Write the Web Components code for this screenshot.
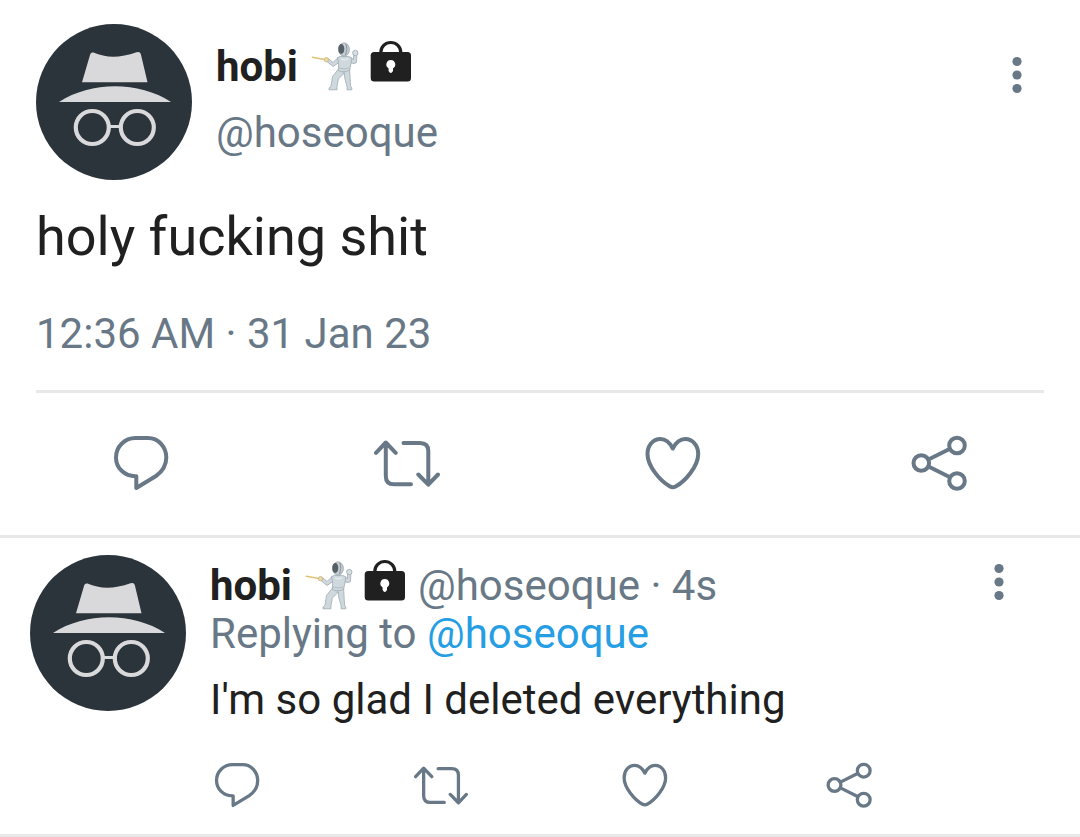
<!DOCTYPE html>
<html lang="en">
<head>
<meta charset="utf-8">
<meta name="viewport" content="width=device-width, initial-scale=1">
<title>Tweet</title>
<style>
    body {
        margin: 0;
        background: #fff;
        color: #202020;
        font-family: Roboto, "Liberation Sans", sans-serif;
        font-size: 42px;
        line-height: 48px;
        --muted: #687886;
        --link: #259ee4;
        --rule: #e8e8e8;
    }
</style>
</head>
<body>
<main>
    <main-tweet>
        <span slot="name">hobi</span>
        <a slot="handle" href="#hoseoque">@hoseoque</a>
        <span slot="text">holy fucking shit</span>
        <time slot="time" datetime="2023-01-31T00:36">12:36 AM · 31 Jan 23</time>
    </main-tweet>
    <reply-tweet>
        <span slot="name">hobi</span>
        <span slot="handle">@hoseoque · 4s</span>
        <a slot="target" href="#hoseoque">@hoseoque</a>
        <span slot="text">I'm so glad I deleted everything</span>
    </reply-tweet>
</main>

<script>
const icons = {
    reply: '<path d="M28.3 58V46.2H27.5C16.500 46.200 8 38 8 27.400S16.500 8 27.500 8H40C50.500 8 58.300 17 58.300 27.500C58.300 35 55 41 48 46Z"/>',
    retweet: '<path d="M2 22.800L11.800 12.500L21.700 22.800M11.800 13V46Q11.800 54.300 20 54.300H37M29.500 13H46Q54.300 13 54.300 21V54M44.300 44.500L54.300 54.700L64 44.500"/>',
    like: '<path d="M32.800 18.500C30 13 26 9 20.500 9C12.500 9 7.500 16 7.500 24C7.500 36 20 51 30 56.500Q32.800 58 35.600 56.500C45.600 51 58.200 36 58.200 24C58.200 16 53 9 45.200 9C39.600 9 35.600 13 32.800 18.500Z"/>',
    share: '<circle cx="15.300" cy="33" r="7.800"/><circle cx="51" cy="15.500" r="7.800"/><circle cx="51" cy="51" r="7.800"/><path d="M22.500 29.500L43.500 19M22.500 36.500L43.500 47"/>'
};

const avatarTemplate = document.createElement('template');
const badgesTemplate = document.createElement('template');
const menuTemplate = document.createElement('template');
const mainTemplate = document.createElement('template');
const replyTemplate = document.createElement('template');

avatarTemplate.innerHTML = `
<style>
    :host {
        display: block;
        flex: none;
    }

    svg {
        display: block;
        width: 156px;
        height: 156px;
    }
</style>
<svg viewBox="0 0 156 156" role="img" aria-label="Avatar">
    <circle cx="78" cy="78" r="78" fill="#2b333b"/>
    <g fill="#d9d9dc">
        <path d="M46 58.300L54.300 30Q55 28 57.500 28.600C70 34.200 84 34.200 100.500 28.300Q104 27.300 104.800 30L111.500 58.300Z"/>
        <path d="M23 78C55 57 103 57 135 78Z"/>
    </g>
    <g fill="none" stroke="#d9d9dc" stroke-width="4.200">
        <circle cx="56.300" cy="103.500" r="16.500"/>
        <circle cx="101.300" cy="103.500" r="16.500"/>
        <path d="M73 102.500H85" stroke-width="3"/>
    </g>
</svg>
`

badgesTemplate.innerHTML = `
<style>
    :host {
        display: flex;
        flex: none;
        gap: 12px;
    }

    svg {
        display: block;
        height: 50px;
        overflow: visible;
    }

    .fencer {
        width: 48px;
    }

    .lock {
        width: 42px;
    }
</style>
<svg class="fencer" viewBox="0 0 48 50" role="img" aria-label="Person fencing">
    <path d="M2.300 15.300L16 17.800" stroke="#e0c274" stroke-width="1.500" stroke-linecap="round"/>
    <g fill="#ced8dd" stroke="#9eacb4" stroke-width=".800" stroke-linejoin="round">
        <path d="M28 15.500L23 20.500L19 17L17 19.500L23 24.500L29 20.500Z"/>
        <path d="M39.500 15.500L43.500 17.500L43.500 12L46.800 12.500L46.500 20.500Q45 22.500 39.500 20.500Z"/>
        <path d="M28.500 27L22.500 34.500L21 44.300L19 46V47.800H27V44.500L28.300 37L34.500 31L34.700 36L37 44.500V47.800H41.800V46L40.500 44L40 34L39.500 26Z"/>
        <path d="M27.500 15.500Q31 13.500 34.500 14.500Q39 13.500 42 16L39.700 28Q34 31.500 28.300 28.500Q29.500 22 27.500 15.500Z"/>
    </g>
    <path d="M29 26Q34 28 39 26M34.300 29L33 32" fill="none" stroke="#a9b7bf" stroke-width=".800"/>
    <path d="M31 17Q34 18.500 38 17" fill="none" stroke="#e4ebee" stroke-width="1.500"/>
    <circle cx="45.300" cy="11" r="2.700" fill="#d5dee2" stroke="#9eacb4" stroke-width=".800"/>
    <ellipse cx="34" cy="7.500" rx="5.400" ry="6.600" fill="#c5cfd4" stroke="#96a3aa" stroke-width=".800"/>
    <ellipse cx="31.300" cy="7" rx="3" ry="5" fill="#566066"/>
    <path d="M36 2Q38 7 35.500 13" fill="none" stroke="#87949b" stroke-width="1"/>
    <circle cx="16.500" cy="17.700" r="2.200" fill="#ead9a4" stroke="#c4b582" stroke-width=".800"/>
</svg>
<svg class="lock" viewBox="0 0 42 50" role="img" aria-label="Locked">
    <path d="M10.800 12V10.500A10 10 0 0 1 30.800 10.500V12" fill="none" stroke="#202020" stroke-width="3.200"/>
    <rect x=".700" y="10" width="40.300" height="29.500" rx="3.500" fill="#202020"/>
    <path d="M20.800 18A4.500 4.500 0 0 0 18.600 26.400V29Q20.800 33 23 29V26.400A4.500 4.500 0 0 0 20.800 18Z" fill="#fff"/>
</svg>
`

menuTemplate.innerHTML = `
<style>
    :host {
        display: block;
        flex: none;
    }

    button {
        display: block;
        padding: 0;
        border: 0;
        background: none;
        cursor: pointer;
    }

    svg {
        display: block;
        width: 54px;
        height: 54px;
        fill: var(--muted);
    }
</style>
<button type="button" aria-label="More">
    <svg viewBox="0 0 54 54"><circle cx="27" cy="13.500" r="4.600"/><circle cx="27" cy="27" r="4.600"/><circle cx="27" cy="40.500" r="4.600"/></svg>
</button>
`

mainTemplate.innerHTML = `
<style>
    :host {
        display: block;
        border-bottom: 3px solid var(--rule);
    }

    .content {
        padding: 24px 36px 0;
    }

    header {
        display: flex;
        gap: 24px;
    }

    .author {
        flex: 1;
        padding-top: 19px;
    }

    .name {
        display: flex;
        align-items: center;
        gap: 12px;
        height: 48px;
        margin-bottom: 18px;
        font-weight: 700;
    }

    tweet-menu {
        padding-top: 24px;
    }

    .text {
        margin: 27px 0 43px;
        font-size: 54px;
        line-height: 60px;
    }

    .time {
        padding-bottom: 32px;
        border-bottom: 3px solid var(--rule);
    }

    .time, .handle {
        color: var(--muted);
    }

    ::slotted(a) {
        color: inherit;
        text-decoration: none;
    }

    tweet-actions {
        padding: 37px 8px 39px;
        justify-items: center;
        --icon: 66px;
    }
</style>
<article>
    <div class="content">
        <header>
            <tweet-avatar></tweet-avatar>
            <div class="author">
                <div class="name"><slot name="name"></slot><name-badges></name-badges></div>
                <div class="handle"><slot name="handle"></slot></div>
            </div>
            <tweet-menu></tweet-menu>
        </header>
        <div class="text"><slot name="text"></slot></div>
        <div class="time"><slot name="time"></slot></div>
    </div>
    <tweet-actions></tweet-actions>
</article>
`

replyTemplate.innerHTML = `
<style>
    :host {
        display: block;
        border-bottom: 3px solid var(--rule);
    }

    article {
        display: flex;
        gap: 24px;
        padding: 17px 54px 22px 30px;
    }

    .body {
        flex: 1;
        min-width: 0;
    }

    header {
        display: flex;
        justify-content: space-between;
    }

    .author {
        padding-top: 7px;
    }

    .name {
        display: flex;
        align-items: center;
        gap: 12px;
        height: 48px;
    }

    .name b {
        font-weight: 700;
    }

    .name .handle, .replying {
        color: var(--muted);
    }

    .text {
        margin: 18px 0 34px;
    }

    ::slotted(a) {
        color: var(--link);
        text-decoration: none;
    }

    tweet-actions {
        --icon: 54px;
    }
</style>
<article>
    <tweet-avatar></tweet-avatar>
    <div class="body">
        <header>
            <div class="author">
                <div class="name">
                    <b><slot name="name"></slot></b>
                    <name-badges></name-badges>
                    <span class="handle"><slot name="handle"></slot></span>
                </div>
                <div class="replying">Replying to <slot name="target"></slot></div>
            </div>
            <tweet-menu></tweet-menu>
        </header>
        <div class="text"><slot name="text"></slot></div>
        <tweet-actions></tweet-actions>
    </div>
</article>
`

class TemplateElement extends HTMLElement {
    constructor(template) {
        super();

        this.attachShadow({ mode: 'open' });
        this.shadowRoot.appendChild(template.content.cloneNode(true));
    }
}

class TweetAvatar extends TemplateElement {
    constructor() { super(avatarTemplate); }
}

class NameBadges extends TemplateElement {
    constructor() { super(badgesTemplate); }
}

class TweetMenu extends TemplateElement {
    constructor() { super(menuTemplate); }
}

class MainTweet extends TemplateElement {
    constructor() { super(mainTemplate); }
}

class ReplyTweet extends TemplateElement {
    constructor() { super(replyTemplate); }
}

class TweetActions extends HTMLElement {
    constructor() {
        super();

        this.attachShadow({ mode: 'open' });
        this.shadowRoot.innerHTML = `
        <style>
            :host {
                display: grid;
                grid-template-columns: repeat(4, 1fr);
                justify-items: start;
            }

            button {
                display: block;
                padding: 0;
                border: 0;
                background: none;
                cursor: pointer;
            }

            svg {
                display: block;
                width: var(--icon);
                height: var(--icon);
                fill: none;
                stroke: var(--muted);
                stroke-width: 4;
                stroke-linecap: round;
                stroke-linejoin: round;
            }
        </style>
        ` + Object.keys(icons).map(name => `
        <button type="button" aria-label="${name}"><svg viewBox="0 0 66 66">${icons[name]}</svg></button>
        `).join('');
    }
}

window.customElements.define('tweet-avatar', TweetAvatar);
window.customElements.define('name-badges', NameBadges);
window.customElements.define('tweet-menu', TweetMenu);
window.customElements.define('tweet-actions', TweetActions);
window.customElements.define('main-tweet', MainTweet);
window.customElements.define('reply-tweet', ReplyTweet);
</script>
</body>
</html>
